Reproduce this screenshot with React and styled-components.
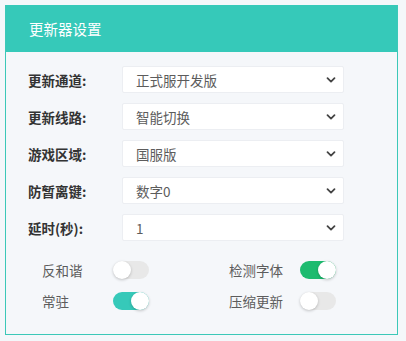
import React, { useState } from "react";
import styled, { createGlobalStyle } from "styled-components";

const Global = createGlobalStyle`
  html, body { margin: 0; padding: 0; background: #f4f7fa; }
  body { font-family: "Noto Sans CJK SC", "Noto Sans", sans-serif; }
`;

const Page = styled.div`
  padding: 5px 8px 6px 5px;
  width: 406px;
  height: 341px;
  box-sizing: border-box;
`;

const Card = styled.div`
  width: 393px;
  height: 330px;
  box-sizing: border-box;
  border: 1px solid #3cc8b8;
  border-top: none;
  background: #f5f7fa;
  display: flex;
  flex-direction: column;
`;

const Header = styled.div`
  height: 47px;
  background: #36c9b9;
  color: #fff;
  font-size: 14.5px;
  display: flex;
  align-items: center;
  padding-left: 23px;
  flex-shrink: 0;
`;

const Body = styled.div`
  padding: 14px 0 0 22px;
  display: flex;
  flex-direction: column;
`;

const Form = styled.div`
  display: flex;
  flex-direction: column;
  gap: 10px;
`;

const Row = styled.div`
  display: flex;
  align-items: center;
  height: 27px;
`;

const Label = styled.div`
  width: 94px;
  font-size: 13.5px;
  font-weight: 700;
  color: #333;
`;

const SelectBox = styled.div`
  width: 222px;
  height: 27px;
  box-sizing: border-box;
  background: #fff;
  border: 1px solid #eceef2;
  border-radius: 2px;
  display: flex;
  align-items: center;
  justify-content: space-between;
  padding: 0 6px 0 13px;
  font-size: 13.5px;
  color: #5c5c5c;
`;

const Chevron = () => (
  <svg width="12" height="12" viewBox="0 0 12 12">
    <path d="M2.5 4.2 L6 7.6 L9.5 4.2" fill="none" stroke="#444" strokeWidth="1.8" strokeLinecap="round" strokeLinejoin="round" />
  </svg>
);

const Toggles = styled.div`
  margin-top: 20px;
  padding-left: 14px;
  display: grid;
  grid-template-columns: 187px 120px;
  row-gap: 13px;
`;

const ToggleItem = styled.div`
  display: flex;
  align-items: center;
  height: 18px;
`;

const ToggleLabel = styled.span`
  width: 71px;
  font-size: 13.5px;
  color: #5c5c5c;
`;

const Track = styled.button`
  position: relative;
  width: 36px;
  height: 18px;
  border: none;
  padding: 0;
  border-radius: 9px;
  background: ${(p) => (p.$on ? p.$color : "#e8e8e8")};
  cursor: pointer;
`;

const Knob = styled.span`
  position: absolute;
  top: 0;
  left: ${(p) => (p.$on ? "18px" : "0")};
  width: 18px;
  height: 18px;
  border-radius: 50%;
  background: #fff;
  box-shadow: 0 1px 3px rgba(0, 0, 0, 0.22);
`;

function Switch({ on, color, onClick }) {
  return (
    <Track $on={on} $color={color} onClick={onClick}>
      <Knob $on={on} />
    </Track>
  );
}

const rows = [
  ["更新通道:", "正式服开发版"],
  ["更新线路:", "智能切换"],
  ["游戏区域:", "国服版"],
  ["防暂离键:", "数字0"],
  ["延时(秒):", "1"],
];

export default function App() {
  const [t, setT] = useState({ a: false, b: true, c: true, d: false });
  const flip = (k) => () => setT((s) => ({ ...s, [k]: !s[k] }));
  return (
    <>
      <Global />
      <Page>
        <Card>
          <Header>更新器设置</Header>
          <Body>
            <Form>
              {rows.map(([l, v]) => (
                <Row key={l}>
                  <Label>{l}</Label>
                  <SelectBox>
                    <span>{v}</span>
                    <Chevron />
                  </SelectBox>
                </Row>
              ))}
            </Form>
            <Toggles>
              <ToggleItem>
                <ToggleLabel>反和谐</ToggleLabel>
                <Switch on={t.a} color="#36c9b9" onClick={flip("a")} />
              </ToggleItem>
              <ToggleItem>
                <ToggleLabel>检测字体</ToggleLabel>
                <Switch on={t.b} color="#1dbb6f" onClick={flip("b")} />
              </ToggleItem>
              <ToggleItem>
                <ToggleLabel>常驻</ToggleLabel>
                <Switch on={t.c} color="#36c9b9" onClick={flip("c")} />
              </ToggleItem>
              <ToggleItem>
                <ToggleLabel>压缩更新</ToggleLabel>
                <Switch on={t.d} color="#1dbb6f" onClick={flip("d")} />
              </ToggleItem>
            </Toggles>
          </Body>
        </Card>
      </Page>
    </>
  );
}
